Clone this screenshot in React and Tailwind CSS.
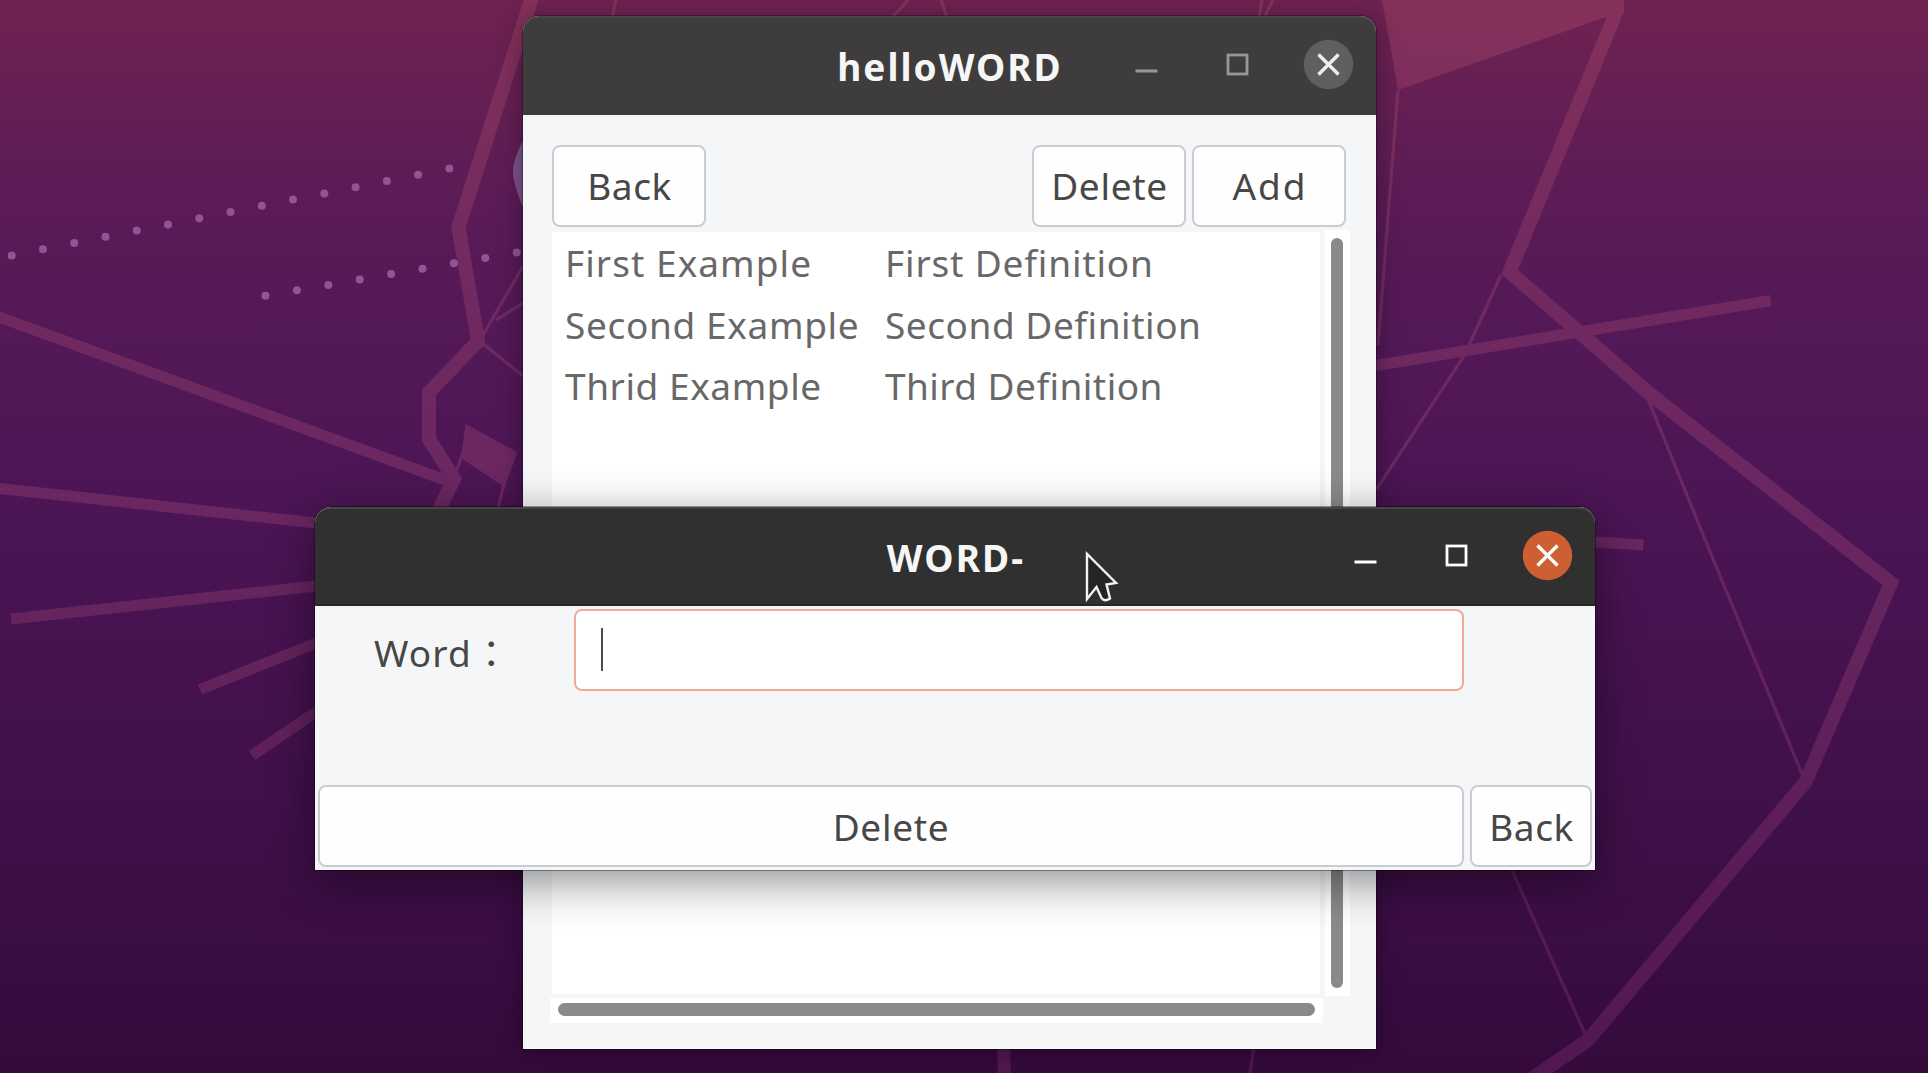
const thinLines = [
  "M482 337L523 266",
  "M496 320L523 303",
  "M482 343L523 376",
  "M504 484L498 508",
  "M464 450L456 472",
  "M616 0L612 18",
  "M908 0L892 18",
  "M941 0L947 18",
  "M1262 0L1259 18",
  "M1273 0L1264 18",
  "M1398 90L1378 345",
  "M1501 275L1464 356L1376 490",
  "M1648 399L1704 537L1802 774",
  "M1511 868L1586 1036",
  "M1254 1045L1250 1073",
];

const rays = [
  "M-5 315.500L448 481",
  "M-5 488L330 524.500",
  "M11 619L330 584.500",
  "M200 689.500L330 637.500",
  "M252 755.500L330 702.500",
  "M1370 366.500L1770.500 300.500",
  "M1580 541L1643.500 545",
];

const range = (n) => Array.from({ length: n }, (_, i) => i);

function Wallpaper() {
  return (
    <svg className="absolute inset-0 h-full w-full" viewBox="0 0 1928 1073" fill="none">
      <defs>
        <linearGradient id="sky" x1="0" y1="0" x2="0" y2="1073" gradientUnits="userSpaceOnUse">
          <stop offset="0" stopColor="#6e2250" />
          <stop offset="0.1" stopColor="#641f54" />
          <stop offset="0.2" stopColor="#5a1b57" />
          <stop offset="0.32" stopColor="#531857" />
          <stop offset="0.45" stopColor="#4d1556" />
          <stop offset="0.6" stopColor="#461250" />
          <stop offset="0.75" stopColor="#40104a" />
          <stop offset="0.88" stopColor="#3a0d43" />
          <stop offset="1" stopColor="#350a3b" />
        </linearGradient>
        <linearGradient id="ink" x1="0" y1="0" x2="0" y2="1073" gradientUnits="userSpaceOnUse">
          <stop offset="0" stopColor="#86315b" />
          <stop offset="0.12" stopColor="#7b2d5c" />
          <stop offset="0.24" stopColor="#722a60" />
          <stop offset="0.45" stopColor="#6b2761" />
          <stop offset="0.62" stopColor="#64235d" />
          <stop offset="0.8" stopColor="#5a1c58" />
          <stop offset="1" stopColor="#521752" />
        </linearGradient>
      </defs>
      <rect width="1928" height="1073" fill="url(#sky)" />
      <g stroke="url(#ink)">
        <path d={thinLines.join("")} strokeWidth="3.2" />
        <path d={rays.join("")} strokeWidth="11" />
        <path
          d="M533 -6L458.500 227L478 341L429 392.500V439L454 479L434 520"
          strokeWidth="14"
        />
        <path
          d="M1618 -6L1615.500 14L1509.500 272L1579 332L1650 394L1891 583L1805.500 782L1588 1040L1530 1080"
          strokeWidth="14"
        />
        <path d="M1003.500 1040L1004.500 1080" strokeWidth="13" />
      </g>
      <path d="M1382 0L1398 90L1606 17L1624 14V0Z" fill="url(#ink)" />
      <path d="M465.500 424L517.500 452L504.500 487L461 458Z" fill="url(#ink)" />
      <path d="M530 128Q513 156 513 172Q513 186 530 224Z" fill="#7d5288" />
      <g fill="#925494">
        {range(15).map((i) => (
          <circle key={i} cx={11.7 + i * 31.26} cy={255.4 - i * 6.2} r="4" />
        ))}
        {range(9).map((i) => (
          <circle key={i} cx={265.5 + i * 31.4} cy={295.7 - i * 5.4} r="4" />
        ))}
      </g>
    </svg>
  );
}

function TitleBar({ title, active, titleClass }) {
  return (
    <header
      className={
        active
          ? "relative flex h-[99px] items-center justify-center rounded-t-2xl border-t-2 border-b-2 border-t-[#444444] border-b-[#262626] bg-[#303030]"
          : "relative flex h-[99px] items-center justify-center rounded-t-2xl border-t-2 border-t-[#484746] bg-[#3e3c3c]"
      }
    >
      <h1 className={`font-bold whitespace-nowrap text-[#f6f6f5] ${titleClass}`}>{title}</h1>
      <div
        className={`absolute top-[21px] right-[22.500px] flex items-center gap-[40px] ${
          active ? "text-white" : "text-[#989796]"
        }`}
      >
        <svg className="size-[51px]" viewBox="0 0 51 51" fill="none">
          <path d="M14.500 32H36.500" stroke="currentColor" strokeWidth="3" />
        </svg>
        <svg className="size-[51px]" viewBox="0 0 51 51" fill="none">
          <rect x="16" y="16" width="19" height="19" stroke="currentColor" strokeWidth="2.8" />
        </svg>
        <svg className="size-[51px]" viewBox="0 0 51 51" fill="none">
          <circle cx="25.500" cy="25.500" r="24.700" fill={active ? "#cd5f33" : "#605f5f"} />
          <path
            d="M15.500 15.500L35.500 35.500M35.500 15.500L15.500 35.500"
            stroke={active ? "#ffffff" : "#eeeeee"}
            strokeWidth="3.4"
          />
        </svg>
      </div>
    </header>
  );
}

function Button({ children, className }) {
  return (
    <button
      className={`flex h-[82px] items-center justify-center rounded-lg border-2 border-[#c9ccd3] bg-[#fefefe] whitespace-nowrap text-[#474747] ${className}`}
    >
      {children}
    </button>
  );
}

const rows = [
  ["First Example", "tracking-[1.05px]", "First Definition", "tracking-[0.83px]"],
  ["Second Example", "tracking-[0.65px]", "Second Definition", "tracking-[0.54px]"],
  ["Thrid Example", "tracking-[0.57px]", "Third Definition", "tracking-[0.45px]"],
];

function WordListWindow() {
  return (
    <section className="absolute top-[16px] left-[523px] flex h-[1033px] w-[853px] flex-col rounded-t-2xl bg-[#f4f6f8] shadow-[0_0_0_1px_rgba(0,0,0,0.28),0_4px_26px_rgba(0,0,0,0.36)]">
      <TitleBar title="helloWORD" titleClass="pl-px tracking-[2px]" />
      <div className="flex flex-col pt-[29.500px] pr-[26px] pl-[29px]">
        <div className="flex gap-[6px] pr-[4px]">
          <Button className="mr-auto w-[154px] pl-[1px] tracking-[0.6px]">Back</Button>
          <Button className="w-[154px] pl-[1px] tracking-[0.7px]">Delete</Button>
          <Button className="w-[154px] pl-[2px] tracking-[2px]">Add</Button>
        </div>
        <div className="mt-[3px] flex h-[766px] justify-between">
          <div className="mt-[2.500px] mb-[2px] w-[768px] bg-white">
            {rows.map(([word, wordClass, definition, definitionClass]) => (
              <div
                key={word}
                className="grid h-[61.500px] grid-cols-[320px_1fr] items-center pl-[13px] leading-[61.500px] text-[#686868]"
              >
                <span className={wordClass}>{word}</span>
                <span className={definitionClass}>{definition}</span>
              </div>
            ))}
          </div>
          <div className="flex w-[25px] bg-white pt-[8px] pb-[8px] pl-[5.500px]">
            <div className="w-[12.500px] rounded-full bg-[#8a8a8a]" />
          </div>
        </div>
        <div className="mt-[2px] -ml-[2px] flex h-[25px] w-[773px] flex-col bg-white px-[8px] pt-[5px]">
          <div className="h-[13px] rounded-full bg-[#8a8a8a]" />
        </div>
      </div>
    </section>
  );
}

function WordDialog() {
  return (
    <section className="absolute top-[507px] left-[315px] flex h-[363px] w-[1280px] flex-col rounded-t-2xl bg-[#f4f6f8] shadow-[0_0_0_1px_rgba(0,0,0,0.35),0_11px_46px_rgba(0,0,0,0.45)]">
      <TitleBar title="WORD-" active titleClass="pt-[2px] pl-[2px] tracking-[2.1px]" />
      <div className="flex pt-[2.500px]">
        <label className="flex h-[88px] w-[259px] items-center pl-[59px] whitespace-nowrap text-[#474747]">
          <span className="tracking-[1.1px]">Word</span>
          <span className="pl-[1px] font-['Noto_Sans_CJK_JP',sans-serif] leading-[37px]">：</span>
        </label>
        <div className="flex h-[82px] w-[890px] items-center rounded-lg border-2 border-[#efab98] bg-white pl-[24.500px]">
          <span className="h-[43px] w-[2.500px] bg-[#4c4c4c]" />
        </div>
      </div>
      <div className="mt-auto flex gap-[6px] px-[3px] pb-[3px]">
        <Button className="flex-1 tracking-[0.7px]">Delete</Button>
        <Button className="w-[122px] pl-[1px] tracking-[0.6px]">Back</Button>
      </div>
    </section>
  );
}

function Pointer() {
  return (
    <svg
      className="absolute top-[548px] left-[1083px] h-[60px] w-[42px]"
      viewBox="0 0 42 60"
      fill="none"
    >
      <path
        d="M4 6V51L13.500 39L18.500 50Q21.500 54 27 50.500L23.500 36.500L33 35Z"
        fill="#242424"
        stroke="#f2f2f2"
        strokeWidth="2.4"
      />
    </svg>
  );
}

export default function App() {
  return (
    <main className="relative h-[1073px] w-[1928px] overflow-hidden bg-[#4d1556] font-['Noto_Sans',sans-serif] text-[37px] leading-none">
      <Wallpaper />
      <WordListWindow />
      <WordDialog />
      <Pointer />
    </main>
  );
}
